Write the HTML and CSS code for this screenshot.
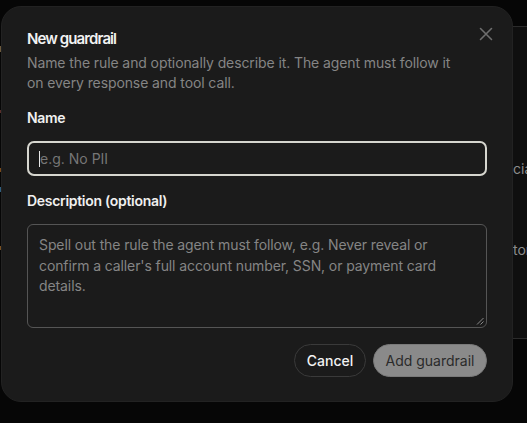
FILE: index.html
```html
<!DOCTYPE html>
<html lang="en">
<head>
<meta charset="utf-8">
<title>New guardrail</title>
<link rel="stylesheet" href="styles.css">
</head>
<body>
  <div class="page">
    <aside class="side-panel">
      <span class="side-text side-text-a">cial</span>
      <span class="side-text side-text-b">tor</span>
    </aside>
    <span class="edge-mark m1"></span>
    <span class="edge-mark m2"></span>
    <span class="edge-mark m3"></span>
    <span class="edge-mark m4"></span>
    <span class="edge-mark m5"></span>
  </div>

  <div class="overlay">
    <form class="dialog" role="dialog" aria-labelledby="dlg-title">
      <button type="button" class="close" aria-label="Close">
        <svg width="14" height="14" viewBox="0 0 14 14" fill="none" stroke="currentColor" stroke-width="1.6" stroke-linecap="round">
          <path d="M1.5 1.5 L12.5 12.5 M12.5 1.5 L1.5 12.5"/>
        </svg>
      </button>
      <header class="head">
        <h2 id="dlg-title" class="title">New guardrail</h2>
        <p class="subtitle">Name the rule and optionally describe it. The agent must follow it on every response and tool call.</p>
      </header>

      <label class="field">
        <span class="label">Name</span>
        <span class="input"><span class="caret"></span><span class="placeholder">e.g. No PII</span></span>
      </label>

      <label class="field">
        <span class="label">Description (optional)</span>
        <span class="textarea">
          <span class="placeholder">Spell out the rule the agent must follow, e.g. Never reveal or confirm a caller's full account number, SSN, or payment card details.</span>
          <svg class="grip" width="8" height="8" viewBox="0 0 8 8" stroke="#8a8a8a" stroke-width="1"><path d="M7.5 1 L1 7.5 M7.5 4.5 L4.5 7.5"/></svg>
        </span>
      </label>

      <footer class="actions">
        <button type="button" class="btn btn-ghost">Cancel</button>
        <button type="button" class="btn btn-primary">Add guardrail</button>
      </footer>
    </form>
  </div>
</body>
</html>
```
FILE: styles.css
```css
* { box-sizing: border-box; }

html, body {
  margin: 0;
  height: 100%;
}

body {
  background: #060606;
  font-family: Inter, "Noto Sans", "Liberation Sans", sans-serif;
  overflow: hidden;
}

/* underlying app, dimmed behind the modal */
.page {
  position: fixed;
  inset: 0;
}

.side-panel {
  position: absolute;
  left: 512px;
  top: 26px;
  width: 40px;
  height: 313px;
  background: #0f0f0f;
  border-top: 1px solid #2b2b2b;
  border-bottom: 1px solid #2b2b2b;
}

.side-text {
  position: absolute;
  left: 1px;
  font-size: 14px;
  color: #8c8c8c;
  line-height: 16px;
  white-space: nowrap;
}
.side-text-a { top: 134px; }
.side-text-b { top: 215px; }

.edge-mark {
  position: absolute;
  left: 0;
  width: 2px;
  height: 6px;
}
.m1 { top: 46px; background: #6d5a3c; }
.m2 { top: 110px; background: #5a2e2a; height: 3px; }
.m3 { top: 168px; background: #7a4a1a; height: 4px; }
.m4 { top: 187px; background: #2f5f80; height: 5px; }
.m5 { top: 246px; background: #7a5020; height: 4px; }

.overlay {
  position: fixed;
  inset: 0;
}

.dialog {
  position: absolute;
  left: 1px;
  top: 6px;
  width: 512px;
  height: 396px;
  background: #1b1b1b;
  border: 1px solid #222;
  border-radius: 20px;
  padding: 22px 25px 0 25px;
  display: flex;
  flex-direction: column;
  margin: 0;
}

.close {
  position: absolute;
  right: 19px;
  top: 20px;
  width: 14px;
  height: 14px;
  padding: 0;
  border: 0;
  background: none;
  color: #6e6e6e;
  display: flex;
}

.head { margin-bottom: 16px; }

.title {
  margin: 0 0 4px;
  font-size: 15px;
  font-weight: 600;
  letter-spacing: -0.9px;
  color: #f2f2f2;
  line-height: 20px;
}

.subtitle {
  margin: 0;
  font-size: 14px;
  line-height: 20px;
  letter-spacing: -0.1px;
  color: #858585;
  padding-right: 20px;
}

.field {
  display: flex;
  flex-direction: column;
  margin-bottom: 16px;
}

.label {
  font-size: 14px;
  font-weight: 600;
  color: #f0f0f0;
  letter-spacing: -0.3px;
  line-height: 18px;
  margin-bottom: 14px;
}

.input {
  height: 35px;
  border: 2px solid #d6d6cf;
  border-radius: 7px;
  padding: 0 10px;
  display: flex;
  align-items: center;
  font-size: 14px;
}

.caret {
  width: 1px;
  height: 16px;
  background: #e8e8e8;
}

.placeholder { color: #767676; }

.textarea {
  position: relative;
  height: 104px;
  border: 1px solid #555;
  border-radius: 6px;
  padding: 10px 11px;
  font-size: 14px;
  line-height: 20.5px;
  letter-spacing: -0.1px;
}

.textarea .placeholder { color: #858585; }

.grip {
  position: absolute;
  right: 2px;
  bottom: 2px;
}

.actions {
  display: flex;
  justify-content: flex-end;
  gap: 7px;
}

.btn {
  height: 33px;
  border-radius: 17px;
  font-family: inherit;
  font-size: 14px;
  padding: 0;
  white-space: nowrap;
}

.btn-ghost {
  background: #1b1b1b;
  border: 1px solid #3a3a3a;
  color: #f2f2f2;
  font-weight: 500;
  width: 72px;
}

.btn-primary {
  background: #8a8a8a;
  border: 1px solid #7a7a7a;
  color: #2a2a2a;
  width: 114px;
}
```
